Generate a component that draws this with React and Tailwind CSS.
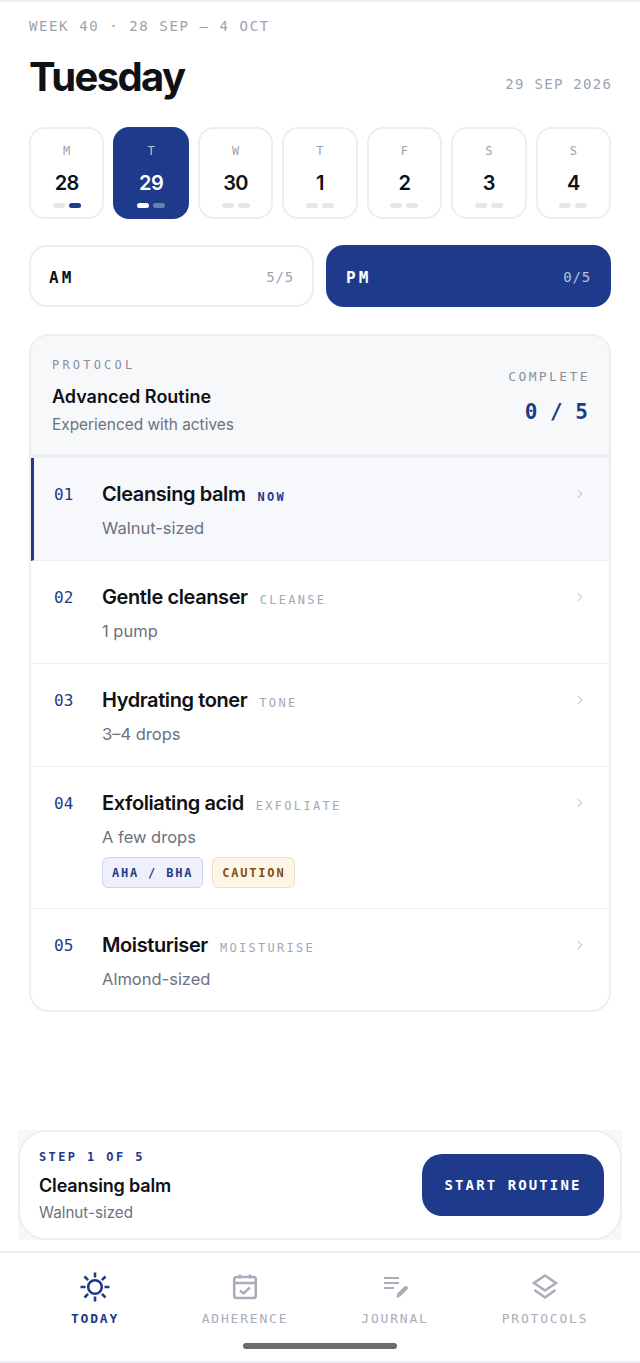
import { ChevronRight } from 'lucide-react';

const mono = "font-['DejaVu_Sans_Mono',monospace]";
const sans = "font-['Inter',sans-serif]";

const days = [
  { letter: 'M', date: '28', dots: ['bg-[#e5e7eb]', 'bg-[#1e3a8a]'] },
  { letter: 'T', date: '29', active: true, dots: ['bg-white', 'bg-[#6b7fb3]'] },
  { letter: 'W', date: '30' },
  { letter: 'T', date: '1' },
  { letter: 'F', date: '2' },
  { letter: 'S', date: '3' },
  { letter: 'S', date: '4' },
];

const steps = [
  { no: '01', name: 'Cleansing balm', tag: 'NOW', amount: 'Walnut-sized', current: true },
  { no: '02', name: 'Gentle cleanser', tag: 'CLEANSE', amount: '1 pump' },
  { no: '03', name: 'Hydrating toner', tag: 'TONE', amount: '3–4 drops' },
  { no: '04', name: 'Exfoliating acid', tag: 'EXFOLIATE', amount: 'A few drops', badges: true },
  { no: '05', name: 'Moisturiser', tag: 'MOISTURISE', amount: 'Almond-sized', last: true },
];

function DayCard({ day }) {
  const dots = day.dots || ['bg-[#e5e7eb]', 'bg-[#e5e7eb]'];
  return (
    <div className={`flex h-[92px] flex-1 flex-col items-center rounded-[16px] border-2 ${day.active ? 'border-[#1e3a8a] bg-[#1e3a8a]' : 'border-[#eceef2] bg-white'}`}>
      <span className={`${mono} mt-[14px] text-[12px] leading-[16px] ${day.active ? 'text-[#b6c2de]' : 'text-[#9ca3af]'}`}>{day.letter}</span>
      <span className={`${sans} mt-[10px] text-[20px] leading-[28px] font-semibold tracking-[-0.6px] ${day.active ? 'text-white' : 'text-[#0f1115]'}`}>{day.date}</span>
      <div className="mt-[6px] flex gap-[4px]">
        <span className={`h-[5px] w-[12px] rounded-full ${dots[0]}`} />
        <span className={`h-[5px] w-[12px] rounded-full ${dots[1]}`} />
      </div>
    </div>
  );
}

function StepRow({ step }) {
  return (
    <div className={`flex items-start pr-[22px] ${step.last ? '' : 'border-b border-[#eceef2]'} ${step.current ? 'border-l-[3px] border-l-[#1e3a8a] bg-[#f7f8fc] pl-[20px]' : 'pl-[23px]'} ${step.badges ? 'h-[142px]' : step.last ? 'h-[101px]' : 'h-[103px]'}`}>
      <span className={`${mono} mt-[27px] w-[48px] shrink-0 text-[16px] leading-[20px] text-[#1e3a8a]`}>{step.no}</span>
      <div className="min-w-0 flex-1 pt-[22px]">
        <div className="flex items-center gap-[12px]">
          <span className={`${sans} text-[20px] leading-[28px] font-semibold tracking-[-0.4px] text-[#0f1115]`}>{step.name}</span>
          <span className={`${mono} mt-[6px] text-[12px] leading-[16px] tracking-[2.3px] ${step.current ? 'font-bold text-[#1e3a8a]' : 'text-[#a3a8b3]'}`}>{step.tag}</span>
        </div>
        <p className={`${sans} mt-[8px] text-[16.5px] leading-[24px] text-[#6b7280]`}>{step.amount}</p>
        {step.badges && (
          <div className="mt-[8px] flex gap-[9px]">
            <span className={`${mono} flex h-[31px] items-center rounded-[6px] border border-[#c9d4ee] bg-[#eef1fb] px-[9px] text-[12px] font-bold tracking-[1.8px] text-[#1e3a8a]`}>AHA / BHA</span>
            <span className={`${mono} flex h-[31px] items-center rounded-[6px] border border-[#f0dfc0] bg-[#fdf5e6] px-[9px] text-[12px] font-bold tracking-[1.8px] text-[#854d0e]`}>CAUTION</span>
          </div>
        )}
      </div>
      <ChevronRight size={14} strokeWidth={1.5} className="mt-[29px] shrink-0 text-[#9ca3af]" />
    </div>
  );
}

function SunIcon() {
  return (
    <svg width="30" height="30" viewBox="0 0 30 30" fill="none" stroke="currentColor" strokeWidth="2.6">
      <circle cx="15" cy="15" r="6.8" />
      <path d="M15 0.5v5M15 24.5v5M0.5 15h5M24.5 15h5M4.5 4.5l3.6 3.6M21.9 21.9l3.6 3.6M4.5 25.5l3.6-3.6M21.9 8.1l3.6-3.6" />
    </svg>
  );
}

function CalendarIcon() {
  return (
    <svg width="28" height="28" viewBox="0 0 28 28" fill="none" stroke="currentColor" strokeWidth="2.6">
      <rect x="3.2" y="4" width="21.6" height="21" rx="2.5" />
      <path d="M3.2 10h21.6M9 1.5v4M19 1.5v4" />
      <path d="M9 17.5l3.5 3 6.5-6" strokeWidth="2.4" />
    </svg>
  );
}

function JournalIcon() {
  return (
    <svg width="28" height="28" viewBox="0 0 28 28" fill="none">
      <path d="M3 5h15M3 10h15M3 15h10" stroke="currentColor" strokeWidth="2.2" />
      <path d="M15.5 25l.8-4.5 7-7c.8-.8 2.2-.8 3 0s.8 2.2 0 3l-7 7-3.8 1.5z" fill="currentColor" />
    </svg>
  );
}

function LayersIcon() {
  return (
    <svg width="28" height="28" viewBox="0 0 28 28" fill="none" stroke="currentColor" strokeWidth="2.6">
      <path d="M14 2.5L25 10 14 17.5 3 10z" />
      <path d="M3.5 17L14 24.5 24.5 17" />
    </svg>
  );
}

function NavItem({ icon: Icon, label, active }) {
  return (
    <div className={`flex flex-1 flex-col items-center ${active ? 'text-[#1e3a8a]' : 'text-[#a8adb9]'}`}>
      <div className="flex h-[30px] items-center justify-center">
        <Icon />
      </div>
      <span className={`${mono} mt-[8px] text-[13px] leading-[18px] tracking-[1.8px] ${active ? 'font-bold' : ''}`}>{label}</span>
    </div>
  );
}

export default function App() {
  return (
    <div className={`${sans} flex h-[1363px] w-[640px] flex-col overflow-hidden border-t-2 border-[#eceef2] bg-white`}>
      <div className="flex-1 px-[29px]">
        <p className={`${mono} mt-[15px] text-[14px] leading-[18px] tracking-[1.6px] text-[#9ca3af]`}>WEEK 40 · 28 SEP – 4 OCT</p>
        <div className="mt-[14px] flex items-end justify-between">
          <h1 className="text-[40px] leading-[56px] font-bold tracking-[-1.6px] text-[#0f1115]">Tuesday</h1>
          <span className={`${mono} -mr-[1.3px] mb-[12px] text-[14px] leading-[18px] tracking-[1.3px] text-[#9ca3af]`}>29 SEP 2026</span>
        </div>

        <div className="mt-[22px] flex gap-[9px]">
          {days.map((day) => (
            <DayCard key={day.date} day={day} />
          ))}
        </div>

        <div className="mt-[26px] flex gap-[12px]">
          <div className="flex h-[62px] flex-1 items-center justify-between rounded-[18px] border-2 border-[#eceef2] bg-white px-[18px]">
            <span className={`${mono} mt-[3px] text-[16px] font-bold tracking-[3px] text-[#0f1115]`}>AM</span>
            <span className={`${mono} mt-[2px] text-[14px] tracking-[0.8px] text-[#9ca3af]`}>5/5</span>
          </div>
          <div className="flex h-[62px] flex-1 items-center justify-between rounded-[18px] bg-[#1e3a8a] px-[20px]">
            <span className={`${mono} mt-[3px] text-[16px] font-bold tracking-[3px] text-white`}>PM</span>
            <span className={`${mono} mt-[2px] text-[14px] tracking-[0.8px] text-[#b6c2de]`}>0/5</span>
          </div>
        </div>

        <section className="mt-[27px] overflow-hidden rounded-[20px] border-2 border-[#eceef2] bg-white">
          <div className="flex h-[122px] items-start justify-between border-b-4 border-[#eceef2] bg-[#f7f8fa] px-[21px]">
            <div className="pt-[21px]">
              <p className={`${mono} text-[12px] leading-[16px] tracking-[3.2px] text-[#8b909b]`}>PROTOCOL</p>
              <p className="mt-[11px] text-[18px] leading-[26px] font-semibold text-[#0f1115]">Advanced Routine</p>
              <p className="mt-[3px] text-[15.4px] leading-[24px] text-[#6b7280]">Experienced with actives</p>
            </div>
            <div className="flex flex-col items-end pt-[32px]">
              <p className={`${mono} -mr-[2px] text-[13px] leading-[18px] tracking-[2.4px] text-[#8b909b]`}>COMPLETE</p>
              <p className={`${mono} mt-[12px] text-[21px] leading-[28px] font-bold text-[#1e3a8a]`}>0 / 5</p>
            </div>
          </div>
          {steps.map((step) => (
            <StepRow key={step.no} step={step} />
          ))}
        </section>
      </div>

      <div className="mx-[18px] bg-[#f6f7f9]">
        <div className="flex h-[110px] items-center justify-between rounded-[28px] border-2 border-[#eceef2] bg-white pr-[16px] pl-[19px]">
          <div className="pt-[3px]">
            <p className={`${mono} text-[12px] leading-[16px] font-bold tracking-[2.4px] text-[#1e3a8a]`}>STEP 1 OF 5</p>
            <p className="mt-[8px] text-[18px] leading-[26px] font-semibold tracking-[-0.15px] text-[#0f1115]">Cleansing balm</p>
            <p className="mt-[2px] text-[15.2px] leading-[24px] text-[#6b7280]">Walnut-sized</p>
          </div>
          <div className={`${mono} flex h-[62px] w-[182px] items-center justify-center rounded-[20px] bg-[#1e3a8a] text-[14px] font-bold tracking-[2.1px] text-white`}>START ROUTINE</div>
        </div>
      </div>

      <nav className="relative mt-[11px] h-[112px] border-y-2 border-[#eceef2] bg-white pt-[19px]">
        <div className="flex px-[20px]">
          <NavItem icon={SunIcon} label="TODAY" active />
          <NavItem icon={CalendarIcon} label="ADHERENCE" />
          <NavItem icon={JournalIcon} label="JOURNAL" />
          <NavItem icon={LayersIcon} label="PROTOCOLS" />
        </div>
        <div className="absolute bottom-[12px] left-[243px] h-[6px] w-[154px] rounded-full bg-[#6b6b6b]" />
      </nav>
    </div>
  );
}
